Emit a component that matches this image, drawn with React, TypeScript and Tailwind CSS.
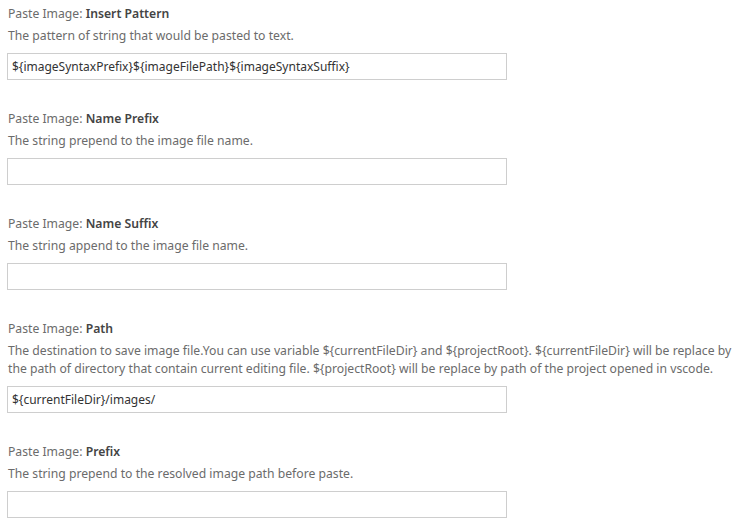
import React from "react";

type Setting = {
  name: string;
  desc: string[];
  value: string;
};

const settings: Setting[] = [
  {
    name: "Insert Pattern",
    desc: ["The pattern of string that would be pasted to text."],
    value: "${imageSyntaxPrefix}${imageFilePath}${imageSyntaxSuffix}",
  },
  {
    name: "Name Prefix",
    desc: ["The string prepend to the image file name."],
    value: "",
  },
  {
    name: "Name Suffix",
    desc: ["The string append to the image file name."],
    value: "",
  },
  {
    name: "Path",
    desc: [
      "The destination to save image file.You can use variable ${currentFileDir} and ${projectRoot}. ${currentFileDir} will be replace by",
      "the path of directory that contain current editing file. ${projectRoot} will be replace by path of the project opened in vscode.",
    ],
    value: "${currentFileDir}/images/",
  },
  {
    name: "Prefix",
    desc: ["The string prepend to the resolved image path before paste."],
    value: "",
  },
];

export default function App() {
  return (
    <div
      className="w-[736px] h-[527px] overflow-hidden bg-white pl-2 pt-[5px] text-[12.2px]"
      style={{ fontFamily: '"Noto Sans", "Liberation Sans", sans-serif' }}
    >
      {settings.map((s) => (
        <div key={s.name} className="mb-[30px] flex flex-col">
          <div className="leading-[18px] whitespace-nowrap">
            <span className="text-[#6b6b6b]">Paste Image: </span>
            <span className="font-semibold text-[#444444]">{s.name}</span>
          </div>
          <div className="mt-1 text-[#6b6b6b] leading-[18px]">
            {s.desc.map((d, i) => (
              <div key={i} className="whitespace-nowrap">
                {d}
              </div>
            ))}
          </div>
          <div className="mt-2 -ml-px flex h-[27px] w-[500px] items-center border border-[#cecece] px-[4px] text-[12px] text-[#333333] whitespace-nowrap">
            {s.value}
          </div>
        </div>
      ))}
    </div>
  );
}
